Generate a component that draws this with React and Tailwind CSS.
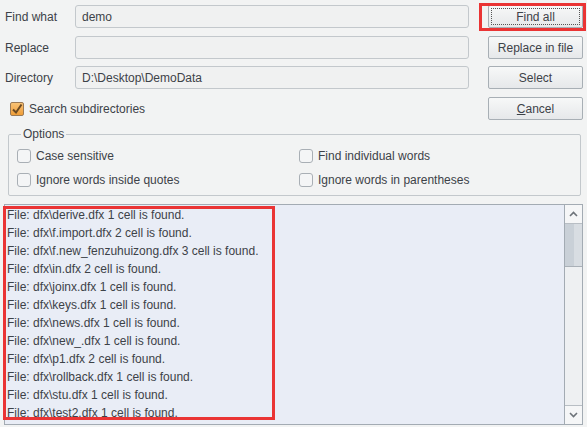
import React from "react";

const files = [
  "File: dfx\\derive.dfx 1 cell is found.",
  "File: dfx\\f.import.dfx 2 cell is found.",
  "File: dfx\\f.new_fenzuhuizong.dfx 3 cell is found.",
  "File: dfx\\in.dfx 2 cell is found.",
  "File: dfx\\joinx.dfx 1 cell is found.",
  "File: dfx\\keys.dfx 1 cell is found.",
  "File: dfx\\news.dfx 1 cell is found.",
  "File: dfx\\new_.dfx 1 cell is found.",
  "File: dfx\\p1.dfx 2 cell is found.",
  "File: dfx\\rollback.dfx 1 cell is found.",
  "File: dfx\\stu.dfx 1 cell is found.",
  "File: dfx\\test2.dfx 1 cell is found.",
];

function Field({ value }) {
  return (
    <div className="w-[394px] shrink-0 h-[23px] rounded-[3px] border border-[#c3c8cc] bg-[#f0f1f1] px-[6px] flex items-center text-[#3d4248]">
      {value}
    </div>
  );
}

function Btn({ children, focus }) {
  return (
    <div className="w-[95px] h-[23px] rounded-[2px] border border-[#a8afb5] bg-gradient-to-b from-[#f7f8f8] to-[#e6e8ea] flex items-center justify-center p-[2px]">
      <div className={`w-full h-full flex items-center justify-center text-[#3d4248] ${focus ? "border border-dotted border-[#555]" : ""}`}>
        {children}
      </div>
    </div>
  );
}

function Check({ checked, label, w }) {
  return (
    <div className={`flex items-center ${w || ""}`}>
      {checked ? (
        <div className="w-[14px] h-[14px] rounded-[2px] border border-[#9c7a55] bg-gradient-to-b from-[#f9c274] to-[#ef9d35] flex items-center justify-center">
          <svg width="12" height="12" viewBox="0 0 12 12">
            <path d="M2 6.5 L5 9.5 L10.5 1.5" fill="none" stroke="#6b4a22" strokeWidth="2" />
          </svg>
        </div>
      ) : (
        <div className="w-[14px] h-[14px] rounded-[3px] border border-[#a9afb5] bg-[#f4f5f6]" />
      )}
      <span className="ml-[5px] text-[#3d4248]">{label}</span>
    </div>
  );
}

export default function App() {
  return (
    <div
      className="w-[587px] h-[427px] bg-[#f2f3f3] overflow-hidden text-[12px] leading-none"
      style={{ fontFamily: '"Liberation Sans", Arial, sans-serif' }}
    >
      {/* Top rows */}
      <div className="flex pt-[5px]">
        <div className="w-[75px] pl-[5px] h-[23px] flex items-center text-[#3d4248]">Find what</div>
        <Field value="demo" />
        <div className="relative ml-[19px]">
          <Btn focus>Find all</Btn>
          <div className="absolute left-[-9px] top-[-2px] w-[107px] h-[28px] border-[3px] border-[#ea3434] pointer-events-none" />
        </div>
      </div>
      <div className="flex mt-[8px]">
        <div className="w-[75px] pl-[5px] h-[23px] flex items-center text-[#3d4248]">Replace</div>
        <Field value="" />
        <div className="ml-[19px]">
          <Btn>Replace in file</Btn>
        </div>
      </div>
      <div className="flex mt-[7px]">
        <div className="w-[75px] pl-[5px] h-[23px] flex items-center text-[#3d4248]">Directory</div>
        <Field value="D:\Desktop\DemoData" />
        <div className="ml-[19px]">
          <Btn>Select</Btn>
        </div>
      </div>
      <div className="flex mt-[8px]">
        <div className="w-[469px] h-[23px] pl-[10px] flex items-center">
          <Check checked label="Search subdirectories" />
        </div>
        <div className="ml-[19px]">
          <Btn>
            <span>
              <span className="underline">C</span>ancel
            </span>
          </Btn>
        </div>
      </div>

      {/* Options */}
      <fieldset className="ml-[8px] mt-[8px] w-[573px] h-[68px] border border-[#c3c8cc] rounded-[2px] px-[8px] pt-[5px]">
        <legend className="px-[2px] ml-[4px] text-[#3d4248]">Options</legend>
        <div className="flex flex-col gap-[10px] pt-[4px]">
          <div className="flex">
            <Check label="Case sensitive" w="w-[282px]" />
            <Check label="Find individual words" />
          </div>
          <div className="flex">
            <Check label="Ignore words inside quotes" w="w-[282px]" />
            <Check label="Ignore words in parentheses" />
          </div>
        </div>
      </fieldset>

      {/* Results */}
      <div className="relative ml-[4px] mt-[8px] w-[579px] h-[221px] border border-[#a3abb3] bg-[#e9edf6] flex">
        <div className="flex-1 pl-[2px] pt-[1px]">
          {files.map((f) => (
            <div key={f} className="h-[18px] flex items-center text-[#3d4248]">
              {f}
            </div>
          ))}
        </div>
        <div className="w-[18px] border-l border-[#a3abb3] flex flex-col bg-[#eef0f2]">
          <div className="h-[19px] border-b border-[#b8bec4] bg-[#f5f6f7] flex items-center justify-center">
            <svg width="9" height="6" viewBox="0 0 9 6">
              <path d="M1 5 L4.5 1.5 L8 5" fill="none" stroke="#6d7379" strokeWidth="1.6" />
            </svg>
          </div>
          <div className="h-[43px] border-b border-[#a9b0b7] flex">
            <div className="flex-1 bg-[#c9d0d7]" />
            <div className="w-[8px] bg-[#d8dde2]" />
          </div>
          <div className="flex-1" />
          <div className="h-[19px] border-t border-[#b8bec4] bg-[#f5f6f7] flex items-center justify-center">
            <svg width="9" height="6" viewBox="0 0 9 6">
              <path d="M1 1 L4.5 4.5 L8 1" fill="none" stroke="#6d7379" strokeWidth="1.6" />
            </svg>
          </div>
        </div>
        <div className="absolute left-[-2px] top-[1px] w-[272px] h-[214px] border-[3px] border-[#ea3434] pointer-events-none" />
      </div>
    </div>
  );
}
